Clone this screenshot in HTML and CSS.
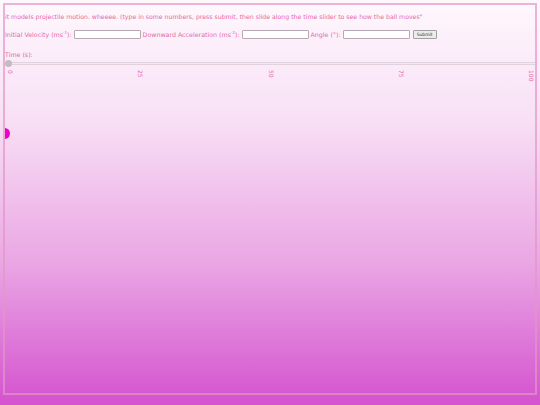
FILE: index.html
```html
<!DOCTYPE html>
<html>
<head>
    <meta charset="UTF-8">
    <title>projectile motion</title>
    <link rel="stylesheet" href="styles.css">
</head>
<body>
    <div class="frame">
        <p class="intro">it models projectile motion. wheeee. (type in some numbers, press submit, then slide along the time slider to see how the ball moves"</p>

        <div class="inputs">
            <label>Initial Velocity (ms<sup>-1</sup>):</label>
            <input type="text" id="velocity">
            <label>Downward Acceleration (ms<sup>-2</sup>):</label>
            <input type="text" id="accel">
            <label>Angle (&deg;):</label>
            <input type="text" id="angle">
            <button class="submit">Submit</button>
        </div>

        <div class="time-label">Time (s):</div>
        <input type="range" class="time-slider" min="0" max="100" value="0">
        <div class="ticks">
            <span>0</span>
            <span>25</span>
            <span>50</span>
            <span>75</span>
            <span>100</span>
        </div>

        <div class="stage">
            <div class="ball"></div>
        </div>
    </div>
</body>
</html>
```

FILE: styles.css
```css
html, body {
    margin: 0;
    height: 100%;
}
body {
    font-family: "DejaVu Sans", sans-serif;
    color: #e56aa6;
    background: linear-gradient(#fef8fd 0%, #f8dff5 30%, #eaa6e4 65%, #d452cf 100%);
    padding: 3px 3px 0 3px;
    box-sizing: border-box;
}
.frame {
    height: 392px;
    border: 2px solid rgba(226, 150, 196, 0.7);
    box-sizing: border-box;
    display: flex;
    flex-direction: column;
    overflow: hidden;
}
.intro {
    font-size: 6.2px;
    margin: 8px 0 0 0;
    white-space: nowrap;
}
.inputs {
    display: flex;
    align-items: center;
    gap: 2px;
    font-size: 6.3px;
    margin-top: 10px;
}
sup {
    font-size: 4px;
    line-height: 0;
}
.inputs input {
    width: 67px;
    height: 9px;
    padding: 0;
    margin: 0;
    border: 1px solid #b8a8b4;
    border-radius: 1px;
    background: white;
    box-sizing: border-box;
}
.submit {
    font-family: "DejaVu Sans", sans-serif;
    font-size: 4.5px;
    height: 9px;
    padding: 0 3px;
    margin-left: 1px;
    border: 1px solid #a0a0a0;
    border-radius: 1px;
    background: #ececec;
    color: #333;
}
.time-label {
    font-size: 6.3px;
    margin-top: 12px;
}
.time-slider {
    -webkit-appearance: none;
    appearance: none;
    width: 100%;
    height: 7px;
    margin: 2px 0 0 0;
    background: transparent;
}
.time-slider::-webkit-slider-runnable-track {
    height: 3px;
    background: #f4e8f2;
    border-top: 1px solid #e2d2de;
    border-bottom: 1px solid #e2d2de;
    box-sizing: border-box;
}
.time-slider::-webkit-slider-thumb {
    -webkit-appearance: none;
    width: 7px;
    height: 7px;
    margin-top: -3px;
    border-radius: 50%;
    background: #c4bcc2;
}
.ticks {
    display: flex;
    justify-content: space-between;
    padding: 0 1px 0 2px;
    margin-top: 3px;
    font-size: 6px;
}
.ticks span {
    writing-mode: vertical-rl;
    line-height: 6px;
}
.stage {
    flex: 1;
    position: relative;
}
.ball {
    position: absolute;
    left: -6px;
    top: 47px;
    width: 11px;
    height: 11px;
    border-radius: 50%;
    background: #f000c8;
}
```
